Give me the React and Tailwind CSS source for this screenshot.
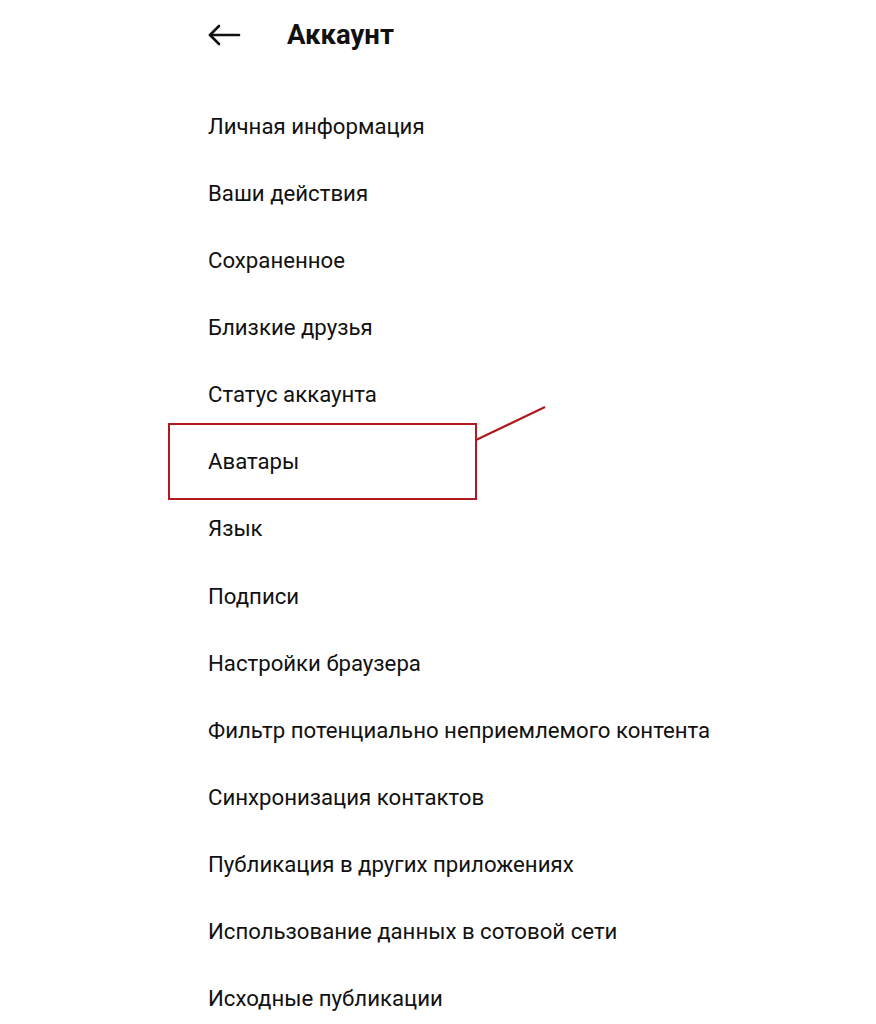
import React from "react";

const items = [
  "Личная информация",
  "Ваши действия",
  "Сохраненное",
  "Близкие друзья",
  "Статус аккаунта",
  "Аватары",
  "Язык",
  "Подписи",
  "Настройки браузера",
  "Фильтр потенциально неприемлемого контента",
  "Синхронизация контактов",
  "Публикация в других приложениях",
  "Использование данных в сотовой сети",
  "Исходные публикации",
];

const BackArrow = () => (
  <svg width="34" height="24" viewBox="0 0 34 24" fill="none" stroke="#111" strokeWidth="2.6" strokeLinecap="round" strokeLinejoin="round">
    <path d="M32 12H3" />
    <path d="M12 3L3 12l9 9" />
  </svg>
);

const App = () => {
  return (
    <div className="w-[876px] h-[1024px] bg-white overflow-hidden text-[#111]" style={{ fontFamily: "Roboto, 'Noto Sans', sans-serif" }}>
      <div className="h-[93px] flex items-start pl-[207px] pt-[21px]">
        <div className="flex items-center h-[28px]">
          <BackArrow />
          <h1 className="ml-[46px] text-[27.5px] font-bold leading-none">Аккаунт</h1>
        </div>
      </div>

      <ul>
        {items.map((item) => (
          <li key={item} className="relative h-[67.1px] flex items-center pl-[208px] text-[22.2px]">
            {item === "Аватары" && (
              <>
                <div className="absolute left-[168px] top-[-5px] w-[309px] h-[77px] border-2 border-[#b0191e]" />
                <svg className="absolute left-[474px] top-[-25px]" width="74" height="40" viewBox="0 0 74 40">
                  <line x1="2" y1="37" x2="71" y2="4" stroke="#b0191e" strokeWidth="2.2" />
                </svg>
              </>
            )}
            <span className="relative">{item}</span>
          </li>
        ))}
      </ul>
    </div>
  );
};

export default App;
